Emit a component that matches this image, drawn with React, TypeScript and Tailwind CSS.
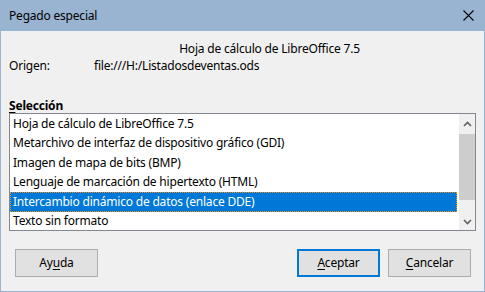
import React from 'react';

const items = [
  'Hoja de cálculo de LibreOffice 7.5',
  'Metarchivo de interfaz de dispositivo gráfico (GDI)',
  'Imagen de mapa de bits (BMP)',
  'Lenguaje de marcación de hipertexto (HTML)',
  'Intercambio dinámico de datos (enlace DDE)',
  'Texto sin formato',
];

const Chevron = ({ up }: { up?: boolean }) => (
  <svg width="9" height="6" viewBox="0 0 9 6" className="block">
    <path
      d={up ? 'M1 5 L4.5 1.5 L8 5' : 'M1 1 L4.5 4.5 L8 1'}
      fill="none"
      stroke="#606060"
      strokeWidth="1.6"
    />
  </svg>
);

const Button = ({ children, primary }: { children: React.ReactNode; primary?: boolean }) => (
  <button
    className={`h-[28px] w-[83px] bg-[#e1e1e1] text-[12px] tracking-[-0.2px] text-black ${
      primary ? 'border-2 border-[#0078d7]' : 'border border-[#adadad]'
    }`}
  >
    {children}
  </button>
);

export default function App() {
  const selected = 4;
  return (
    <div
      className="flex h-[292px] w-[485px] flex-col text-[12px] tracking-[-0.2px] text-black"
      style={{ fontFamily: '"Noto Sans", "Open Sans", sans-serif' }}
    >
      {/* Title bar */}
      <div className="flex h-[31px] shrink-0 items-center justify-between bg-[#99b4d1] pl-[9px] pr-[10px]">
        <span className="text-[12px] leading-none">Pegado especial</span>
        <svg width="11" height="11" viewBox="0 0 11 11" className="mr-[1px]">
          <path d="M0.5 0.5 L10.5 10.5 M10.5 0.5 L0.5 10.5" stroke="#000" strokeWidth="1.1" />
        </svg>
      </div>

      {/* Body */}
      <div className="flex flex-1 flex-col border-x border-b border-[#99b4d1] bg-[#f0f0f0] px-[8px]">
        <div className="grid grid-cols-[85px_1fr] pt-[9px] leading-[17px]">
          <div />
          <div className="pr-[31px] text-center">Hoja de cálculo de LibreOffice 7.5</div>
          <div>Origen:</div>
          <div>file:///H:/Listadosdeventas.ods</div>
        </div>

        <div className="mt-[25px] text-[12px] font-bold leading-[14px]">
          <span className="underline underline-offset-2">S</span>elección
        </div>

        {/* List box */}
        <div className="flex h-[118px] w-[467px] border border-[#828790] bg-white">
          <div className="flex-1 overflow-hidden pr-[2px]">
            {items.map((it, i) => (
              <div
                key={it}
                className={`flex h-[19.5px] items-center whitespace-nowrap pl-[2px] ${
                  i === selected
                    ? 'border border-dotted border-[#f58c1e] bg-[#0078d7] text-white'
                    : 'border border-transparent'
                }`}
              >
                {it}
              </div>
            ))}
          </div>
          <div className="flex w-[16px] flex-col bg-[#f0f0f0]">
            <div className="flex h-[20px] items-center justify-center">
              <Chevron up />
            </div>
            <div className="h-[66px] bg-[#cdcdcd]" />
            <div className="flex-1" />
            <div className="flex h-[17px] items-center justify-center">
              <Chevron />
            </div>
          </div>
        </div>

        {/* Buttons */}
        <div className="mt-[18px] flex items-center pl-[6px] pr-[5px]">
          <Button>
            Ay<span className="underline underline-offset-2">u</span>da
          </Button>
          <div className="flex-1" />
          <Button primary>
            <span className="underline underline-offset-2">A</span>ceptar
          </Button>
          <div className="w-[8px]" />
          <Button>
            <span className="underline underline-offset-2">C</span>ancelar
          </Button>
        </div>
      </div>
    </div>
  );
}
